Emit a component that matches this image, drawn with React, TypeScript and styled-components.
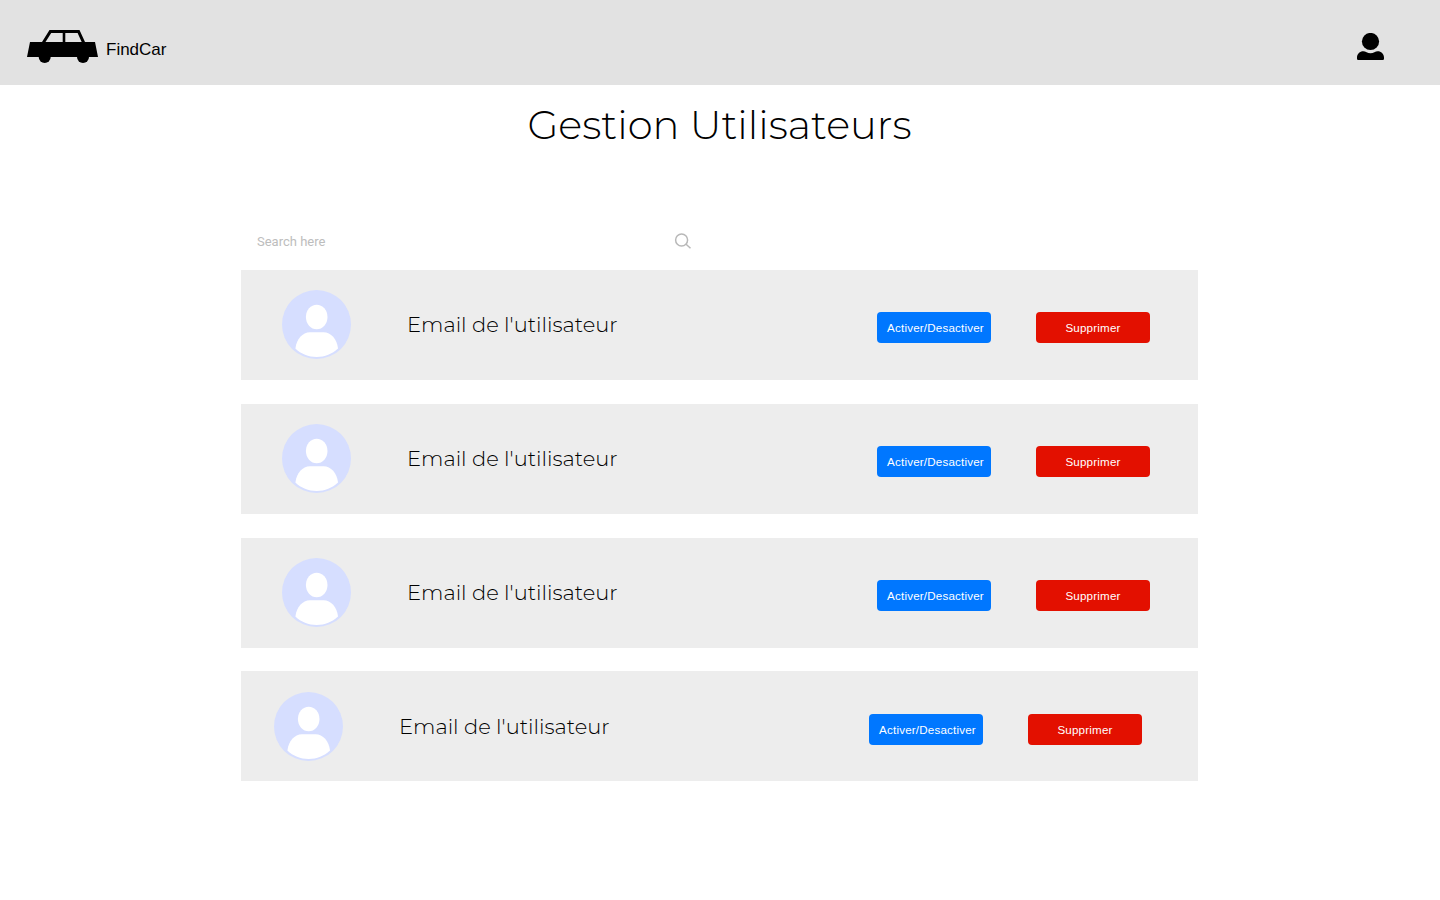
import React from 'react';
import styled, { createGlobalStyle } from 'styled-components';

const GlobalStyle = createGlobalStyle`
  * { box-sizing: border-box; }
  body { margin: 0; background: #ffffff; color: #000; }
`;

const Header = styled.header`
  display: flex;
  justify-content: space-between;
  height: 85px;
  padding: 30px 56px 0 27px;
  background: #e2e2e2;
`;

const Brand = styled.div`
  display: flex;
  gap: 8px;
  svg { display: block; }
`;

const BrandName = styled.span`
  margin-top: 10px;
  font: 17px/20px 'Liberation Sans', Arial, sans-serif;
`;

const AccountButton = styled.a`
  margin-top: 3px;
  svg { display: block; }
`;

const Title = styled.h1`
  margin: 15px 0 0;
  padding-right: 1px;
  text-align: center;
  font: 300 40px/50px Montserrat, Lato, sans-serif;
  white-space: nowrap;
`;

const Main = styled.main`
  width: 957px;
  margin: 72px 0 0 241px;
`;

const SearchBar = styled.label`
  display: flex;
  align-items: center;
  justify-content: space-between;
  width: 450px;
  height: 38px;
  margin-bottom: 10px;
  padding-left: 16px;
  color: #bdbdbd;
  font: 13px/16px Roboto, sans-serif;
  span { padding-top: 2px; }
  svg { display: block; }
`;

const List = styled.div`
  display: flex;
  flex-direction: column;
  gap: 24px;
`;

const Row = styled.article<{ $last?: boolean }>`
  display: flex;
  height: 110px;
  margin-top: ${(p) => (p.$last ? '-1px' : '0')};
  padding: ${(p) => (p.$last ? '21px 0 0 33px' : '20px 0 0 41px')};
  background: #ededed;
  svg { display: block; flex: none; }
`;

const Email = styled.span`
  width: 470px;
  margin: 20px 0 0 56px;
  font: 300 21px/30px Montserrat, Lato, sans-serif;
  white-space: nowrap;
`;

const Actions = styled.div`
  display: flex;
  gap: 45px;
  margin: 22px 0 0 0;
`;

const Button = styled.button<{ $tone: 'toggle' | 'danger' }>`
  width: 114px;
  height: 31px;
  padding: ${(p) => (p.$tone === 'toggle' ? '1px 0 0 3px' : '1px 0 0')};
  border: 0;
  border-radius: 4px;
  background: ${(p) => (p.$tone === 'toggle' ? '#0077ff' : '#e31000')};
  color: #fff;
  font: 11.6px/16px 'Liberation Sans', Arial, sans-serif;
  letter-spacing: 0.19px;
  white-space: nowrap;
`;

const CarLogo = () => (
  <svg width="71" height="33" viewBox="0 0 71 33">
    <path
      fillRule="evenodd"
      d="M3 12H15L22.5 0H52.5L58 12H68L71 27H0ZM18.5 12H35.7V3H24.2ZM38.3 12H54.7L50.6 3H38.3Z"
    />
    <circle cx="17.7" cy="27" r="6" />
    <circle cx="56" cy="27" r="6" />
  </svg>
);

const AccountIcon = () => (
  <svg width="27" height="27" viewBox="0 0 27 27">
    <circle cx="13.5" cy="8.5" r="8.6" />
    <path d="M1.2 27Q0 27 0 25.8V24.5C0 21 3 18.3 6.2 18.3C8.6 18.3 10.5 20.3 13.5 20.3S18.4 18.3 20.8 18.3C24 18.3 27 21 27 24.5V25.8Q27 27 25.8 27Z" />
  </svg>
);

const SearchIcon = () => (
  <svg width="17" height="17" viewBox="0 0 17 17" fill="none" stroke="#b8b8b8" strokeWidth="1.5">
    <circle cx="7.6" cy="7" r="6" />
    <path d="M11.8 11L16.5 15.3" />
  </svg>
);

const Avatar = () => (
  <svg width="69" height="69" viewBox="0 0 69 69">
    <circle cx="34.5" cy="34.5" r="34.5" fill="#d6deff" />
    <ellipse cx="34.7" cy="27" rx="10.8" ry="12.2" fill="#fff" />
    <path
      d="M13.4 58.5C14.5 49 20.5 42.2 28 42.2H41.5C49 42.2 55 49 56 58.5C50 64 43 67 34.7 67S19 64 13.4 58.5Z"
      fill="#fff"
    />
  </svg>
);

const users = [1, 2, 3, 4];

export default function App() {
  return (
    <>
      <GlobalStyle />
      <Header>
        <Brand>
          <CarLogo />
          <BrandName>FindCar</BrandName>
        </Brand>
        <AccountButton>
          <AccountIcon />
        </AccountButton>
      </Header>
      <Title>Gestion Utilisateurs</Title>
      <Main>
        <SearchBar>
          <span>Search here</span>
          <SearchIcon />
        </SearchBar>
        <List>
          {users.map((id) => (
            <Row key={id} $last={id === users.length}>
              <Avatar />
              <Email>Email de l'utilisateur</Email>
              <Actions>
                <Button $tone="toggle">Activer/Desactiver</Button>
                <Button $tone="danger">Supprimer</Button>
              </Actions>
            </Row>
          ))}
        </List>
      </Main>
    </>
  );
}
